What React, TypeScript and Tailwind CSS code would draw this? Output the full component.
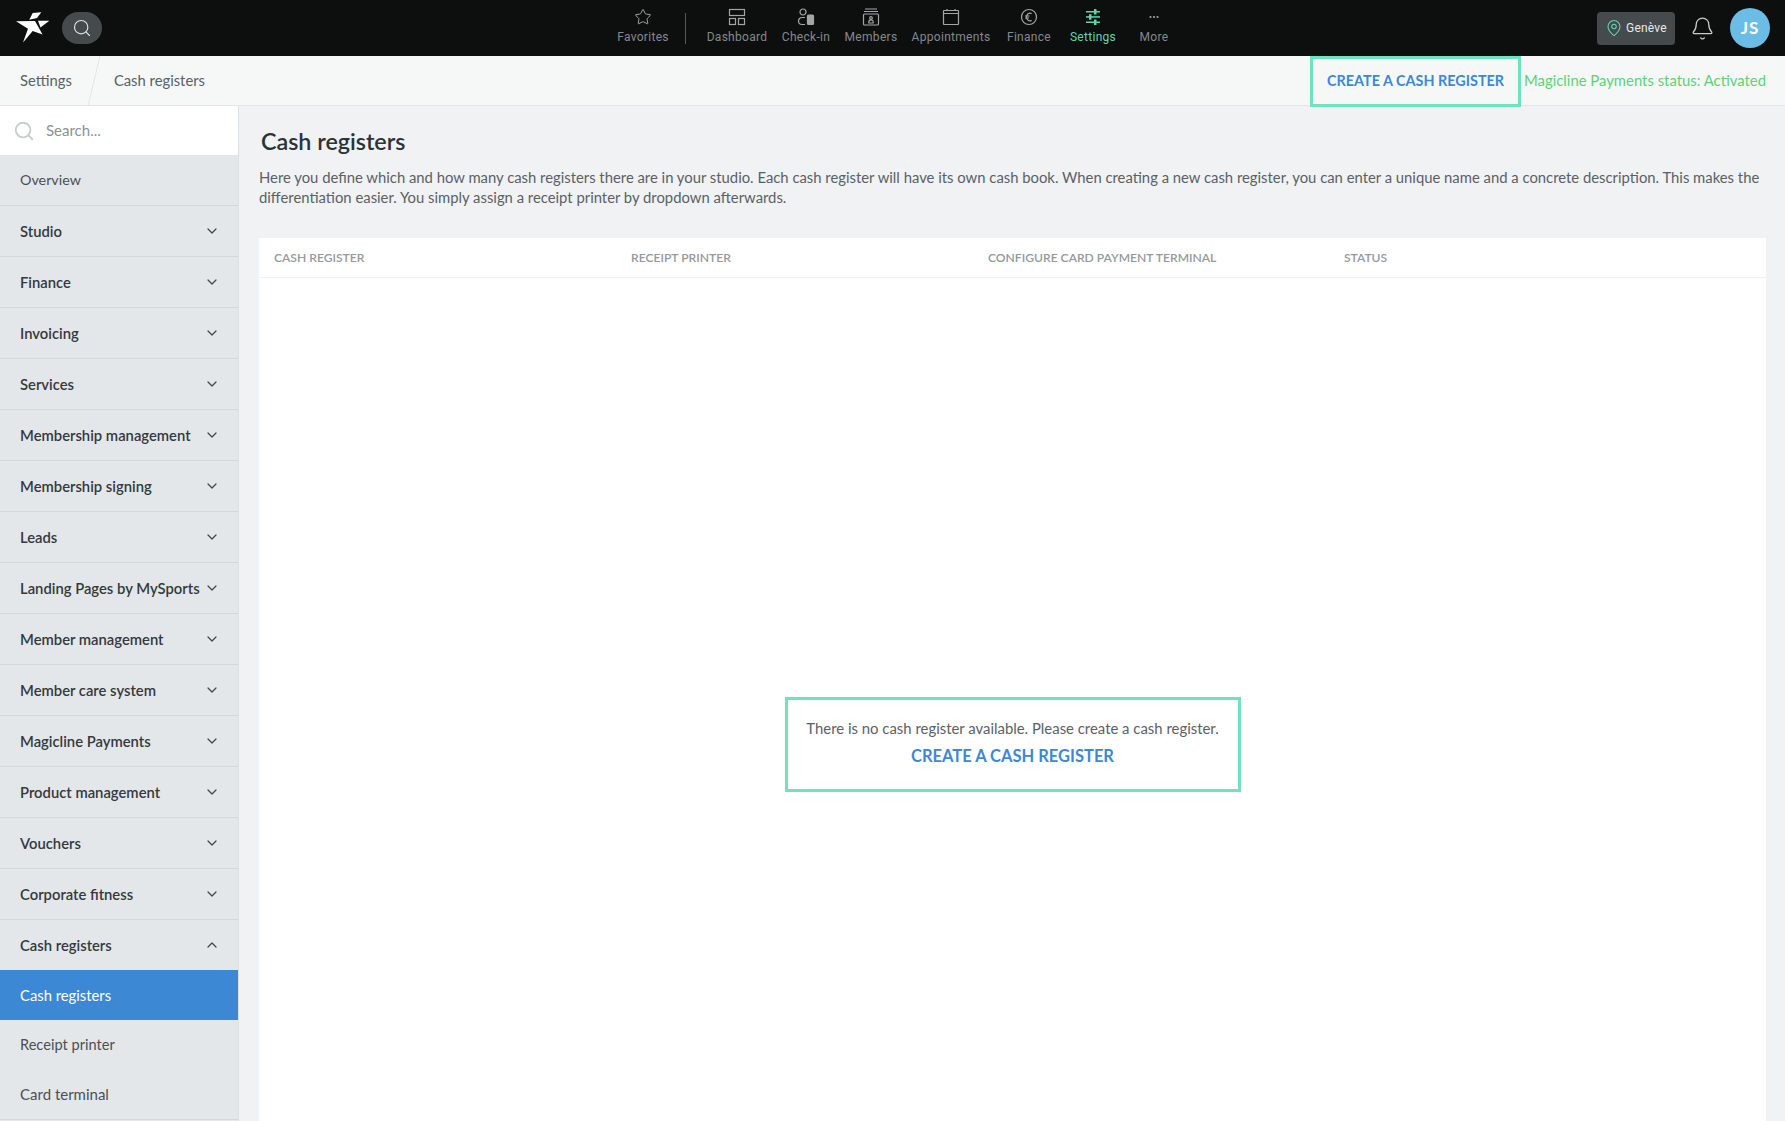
import React from "react";
import { Bell, ChevronDown, ChevronUp, MapPin, Search, Star } from "lucide-react";

const sideItems = [
  "Studio",
  "Finance",
  "Invoicing",
  "Services",
  "Membership management",
  "Membership signing",
  "Leads",
  "Landing Pages by MySports",
  "Member management",
  "Member care system",
  "Magicline Payments",
  "Product management",
  "Vouchers",
  "Corporate fitness",
];

function DashboardIcon() {
  return (
    <svg width="18" height="18" viewBox="0 0 18 18" fill="none" stroke="currentColor" strokeWidth="1.2">
      <rect x="1.5" y="1.5" width="15" height="6" />
      <rect x="1.5" y="10.5" width="6" height="6" />
      <rect x="10.5" y="10.5" width="6" height="6" />
    </svg>
  );
}

function CheckinIcon() {
  return (
    <svg width="18" height="18" viewBox="0 0 18 18" fill="none" stroke="currentColor" strokeWidth="1.2">
      <circle cx="6" cy="4" r="3" />
      <path d="M8 9.5H5a3.5 3.5 0 0 0 0 7h3" />
      <rect x="10.5" y="7" width="6" height="9.5" rx="1" fill="currentColor" />
    </svg>
  );
}

function MembersIcon() {
  return (
    <svg width="18" height="18" viewBox="0 0 18 18" fill="none" stroke="currentColor" strokeWidth="1.2">
      <path d="M3 1h12M2 3.5h14" />
      <rect x="1.5" y="6" width="15" height="11" rx="1" />
      <circle cx="9" cy="10" r="1.3" />
      <path d="M6.8 15v-1a2.2 2.2 0 0 1 4.4 0v1z" />
    </svg>
  );
}

function CalendarIcon() {
  return (
    <svg width="18" height="18" viewBox="0 0 18 18" fill="none" stroke="currentColor" strokeWidth="1.2">
      <rect x="1.5" y="2.5" width="15" height="14" rx="0.5" />
      <path d="M1.5 5.5h15M5 1v2M13 1v2" />
    </svg>
  );
}

function EuroIcon() {
  return (
    <svg width="18" height="18" viewBox="0 0 18 18" fill="none" stroke="currentColor" strokeWidth="1.2">
      <circle cx="9" cy="9" r="7.5" />
      <path d="M11.6 5.6a3.4 3.4 0 0 0-5 3.4 3.4 3.4 0 0 0 5 3.4M5 8h4.5M5 10h4" />
    </svg>
  );
}

function SlidersIcon() {
  return (
    <svg width="18" height="18" viewBox="0 0 18 18" fill="currentColor">
      <rect x="2" y="3" width="14" height="1.5" />
      <rect x="10" y="1" width="2.5" height="5.5" />
      <rect x="2" y="8.2" width="14" height="1.5" />
      <rect x="5" y="6.2" width="2.5" height="5.5" />
      <rect x="2" y="13.5" width="14" height="1.5" />
      <rect x="10" y="11.5" width="2.5" height="5.5" />
    </svg>
  );
}

function DotsIcon() {
  return (
    <svg width="18" height="18" viewBox="0 0 18 18" fill="currentColor">
      <circle cx="5.5" cy="9" r="1.1" />
      <circle cx="9" cy="9" r="1.1" />
      <circle cx="12.5" cy="9" r="1.1" />
    </svg>
  );
}

const navItems = [
  { label: "Dashboard", icon: <DashboardIcon />, cls: "w-[62px] ml-[20px]" },
  { label: "Check-in", icon: <CheckinIcon />, cls: "w-[50px] ml-[13px]" },
  { label: "Members", icon: <MembersIcon />, cls: "w-[54px] ml-[13px]" },
  { label: "Appointments", icon: <CalendarIcon />, cls: "w-[80px] ml-[13px]" },
  { label: "Finance", icon: <EuroIcon />, cls: "w-[48px] ml-[14px]" },
  { label: "Settings", icon: <SlidersIcon />, cls: "w-[48px] ml-[16px] text-[#5fd6ad]" },
  { label: "More", icon: <DotsIcon />, cls: "w-[32px] ml-[21px]" },
];

function NavItem({ label, icon, cls }: { label: string; icon: React.ReactNode; cls: string }) {
  return (
    <div className={`flex flex-col items-center mt-[-3px] ${cls}`}>
      <div className={`h-[18px] flex items-center justify-center ${label === "Settings" ? "" : "text-[#a3a6a7]"}`}>{icon}</div>
      <span className="mt-[3px] text-[12px] leading-[16px] tracking-[0.3px] whitespace-nowrap font-['Roboto',sans-serif]">
        {label}
      </span>
    </div>
  );
}

function SideRow({ label }: { label: string }) {
  return (
    <div className="h-[51px] border-b border-[#d3d8dc] pl-[20px] pr-[18px] flex items-center justify-between">
      <span className="text-[14.8px] font-semibold text-[#33393d] whitespace-nowrap">{label}</span>
      <ChevronDown className="w-[16px] h-[16px] text-[#3f4549]" strokeWidth={1.8} />
    </div>
  );
}

export default function App() {
  return (
    <div className="w-[1785px] h-[1121px] overflow-hidden bg-[#f1f2f4] font-['Lato',sans-serif] text-[#5a6166]">
      {/* Top bar */}
      <header className="h-[56px] bg-[#0d0f0f] flex items-center relative">
        <svg className="ml-[15px]" width="35" height="32" viewBox="0 0 35 32" fill="#ffffff">
          <path d="M17.7 1 L26.3 0.3 L22 6 L14.3 7.7 Z" />
          <path d="M1 9.3 L20 9 L24.5 17 L27.5 22.5 L17.7 19 L8 30.5 L13 16.7 Z" />
          <path d="M23 8.8 L34.3 8.7 L25.5 15.5 Z" />
        </svg>
        <div className="ml-[12px] w-[40px] h-[32px] rounded-full bg-[#454a4c] flex items-center justify-center">
          <Search className="w-[20px] h-[20px] text-[#dfe1e2]" strokeWidth={1.4} />
        </div>
        <nav className="ml-[513px] flex items-center text-[#85898b]">
          <NavItem label="Favorites" icon={<Star className="w-[18px] h-[18px]" strokeWidth={1.3} />} cls="w-[56px]" />
          <div className="ml-[14px] w-px h-[31px] bg-[#55595b]" />
          {navItems.map((item) => (
            <NavItem key={item.label} {...item} />
          ))}
        </nav>
        <div className="ml-auto flex items-center">
          <div className="w-[78px] h-[33px] rounded-[4px] bg-[#454a4c] flex items-center justify-center gap-[3px]">
            <MapPin className="w-[18px] h-[18px] text-[#5fd6ad]" strokeWidth={1.4} />
            <span className="text-[12px] tracking-[0.2px] text-[#e8e9ea] font-['Roboto',sans-serif]">Genève</span>
          </div>
          <Bell className="ml-[15px] w-[25px] h-[25px] text-[#c9cccd]" strokeWidth={1.2} />
          <div className="ml-[15px] mr-[15px] w-[40px] h-[40px] rounded-full bg-[#6bbde6] flex items-center justify-center text-white text-[17px] font-bold tracking-[1px]">
            JS
          </div>
        </div>
      </header>

      {/* Breadcrumb bar */}
      <div className="h-[50px] bg-[#f6f8f8] border-b border-[#e2e4e6] flex items-center relative">
        <span className="ml-[20px] text-[14.8px] text-[#5a6166]">Settings</span>
        <svg className="ml-[15px]" width="14" height="50" viewBox="0 0 14 50" fill="none" stroke="#e2e4e6">
          <path d="M13 0 L1 50" />
        </svg>
        <span className="ml-[13px] text-[14.8px] text-[#5a6166]">Cash registers</span>
        <div className="ml-auto flex items-center">
          <div className="w-[211px] h-[51px] mt-px border-[3px] border-[#6fe3bb] flex items-center justify-center text-[14.4px] font-bold text-[#3d88d4] whitespace-nowrap">
            CREATE A CASH REGISTER
          </div>
          <span className="ml-[3px] mr-[19px] text-[14.85px] text-[#5fd078] whitespace-nowrap">Magicline Payments status: Activated</span>
        </div>
      </div>

      <div className="flex">
        {/* Sidebar */}
        <aside className="w-[239px] h-[1015px] shrink-0 bg-[#e4e7ea] border-r border-[#dde0e3]">
          <div className="h-[49px] bg-white flex items-center pl-[13px]">
            <Search className="w-[22px] h-[22px] text-[#c9ccce]" strokeWidth={2} />
            <span className="ml-[11px] text-[15px] text-[#8d9296]">Search...</span>
          </div>
          <div className="h-[51px] border-b border-[#d3d8dc] pl-[20px] flex items-center">
            <span className="text-[14.3px] text-[#4a5055]">Overview</span>
          </div>
          {sideItems.map((s) => (
            <SideRow key={s} label={s} />
          ))}
          <div className="h-[50px] pl-[20px] pr-[18px] flex items-center justify-between">
            <span className="text-[14.8px] font-semibold text-[#33393d]">Cash registers</span>
            <ChevronUp className="w-[16px] h-[16px] text-[#3f4549]" strokeWidth={1.8} />
          </div>
          <div className="h-[50px] bg-[#3d88d4] pl-[20px] flex items-center text-[14.8px] text-white">Cash registers</div>
          <div className="h-[50px] pl-[20px] flex items-center text-[14.6px] text-[#4a5055]">Receipt printer</div>
          <div className="h-[50px] pl-[20px] flex items-center text-[15px] text-[#4a5055] border-b border-[#d3d8dc]">Card terminal</div>
        </aside>

        {/* Main */}
        <main className="flex-1 pl-[20px] pr-[19px]">
          <h1 className="mt-[19px] ml-[2px] text-[23.3px] leading-[32px] font-semibold text-[#2b3238]">Cash registers</h1>
          <p className="mt-[10px] text-[14.84px] leading-[20px] text-[#5a6166]">
            Here you define which and how many cash registers there are in your studio. Each cash register will have its own cash book. When creating a new cash register, you can enter a unique name and a concrete description. This makes the differentiation easier. You simply assign a receipt printer by dropdown afterwards.
          </p>
          <div className="mt-[31px] bg-white h-[900px]">
            <div className="h-[40px] border-b border-[#f1f2f4] flex items-center pt-[2px] pl-[15px] text-[12.1px] font-semibold text-[#94999d]">
              <span className="w-[357px]">CASH REGISTER</span>
              <span className="w-[357px]">RECEIPT PRINTER</span>
              <span className="w-[356px]">CONFIGURE CARD PAYMENT TERMINAL</span>
              <span>STATUS</span>
            </div>
            <div className="pt-[419px] flex justify-center">
              <div className="w-[456px] h-[95px] pb-[3px] border-[3px] border-[#6fe3bb] flex flex-col items-center justify-center">
                <span className="text-[14.9px] text-[#5a6166]">There is no cash register available. Please create a cash register.</span>
                <span className="mt-[5px] text-[16.5px] font-bold text-[#3d88d4]">CREATE A CASH REGISTER</span>
              </div>
            </div>
          </div>
        </main>
      </div>
    </div>
  );
}
